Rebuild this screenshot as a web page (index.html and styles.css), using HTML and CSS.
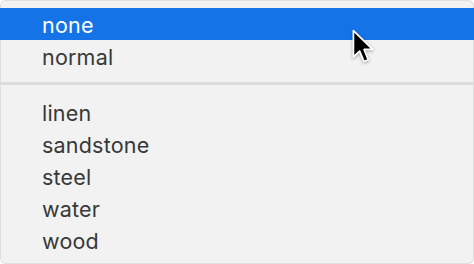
FILE: index.html
```html
<!DOCTYPE html>
<html>
<head>
<meta charset="utf-8">
<link rel="stylesheet" href="styles.css">
</head>
<body>
<div class="menu">
  <div class="item selected">none</div>
  <div class="item">normal</div>
  <div class="separator"></div>
  <div class="item">linen</div>
  <div class="item">sandstone</div>
  <div class="item">steel</div>
  <div class="item">water</div>
  <div class="item">wood</div>
  <svg class="cursor" width="24" height="38" viewBox="-1.5 -1.5 15 23.5">
    <path d="M0 0 L0 16.5 L3.9 12.8 L6.6 19.3 L9.3 18.2 L6.7 11.8 L12 11.8 Z" fill="#000" stroke="#fff" stroke-width="1.1" stroke-linejoin="round"/>
  </svg>
</div>
</body>
</html>
```
FILE: styles.css
```css
html, body {
  margin: 0;
  padding: 0;
  background: #ffffff;
}
.menu {
  position: relative;
  width: 474px;
  height: 264px;
  box-sizing: border-box;
  padding-top: 8px;
  background: #f2f2f2;
  border-radius: 6px;
  box-shadow: inset 0 0 0 1px rgba(0,0,0,0.08);
  overflow: hidden;
  font-family: Inter, "Liberation Sans", sans-serif;
  font-size: 21.5px;
  letter-spacing: 0.2px;
  color: #383838;
}
.item {
  height: 32px;
  display: flex;
  align-items: center;
  padding-left: 42px;
  padding-top: 1px;
  box-sizing: border-box;
}
.item.selected {
  background: #1473e6;
  color: #ffffff;
}
.separator {
  height: 3px;
  margin: 10px 0 11px;
  background: #dcdcdc;
}
.cursor {
  position: absolute;
  left: 351px;
  top: 28px;
  filter: drop-shadow(0 1px 1.5px rgba(0,0,0,0.35));
}
```
